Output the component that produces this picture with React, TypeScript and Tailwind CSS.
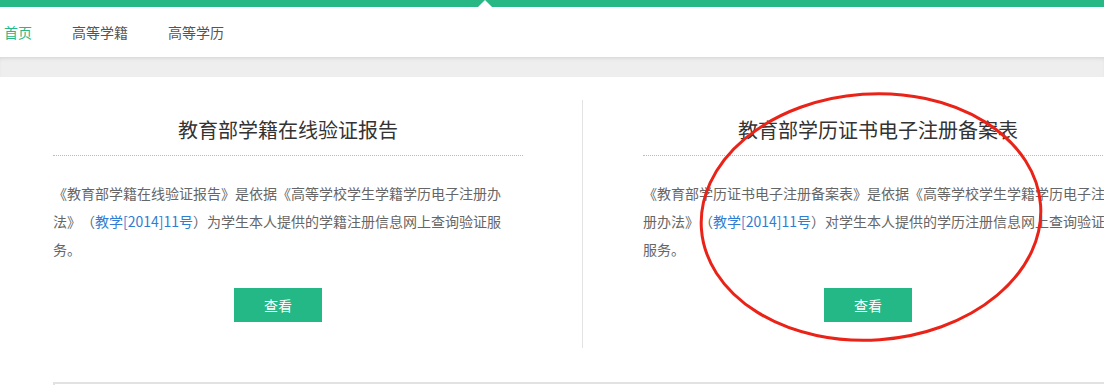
export default function App() {
  const font = { fontFamily: '"Noto Sans CJK SC", "Noto Sans", sans-serif' };

  return (
    <div className="relative w-[1104px] h-[385px] overflow-hidden bg-white" style={font}>
      {/* top bar with notch */}
      <div className="relative h-[7px] bg-[#27b886]">
        <div className="absolute left-[478px] top-0 w-0 h-0 border-l-[7px] border-r-[7px] border-b-[7px] border-l-transparent border-r-transparent border-b-white" />
      </div>

      {/* nav */}
      <div className="h-[50px] flex items-center gap-10 pl-1 text-[14px] text-[#555]">
        <span className="text-[#27b886]">首页</span>
        <span>高等学籍</span>
        <span>高等学历</span>
      </div>

      <div className="h-[20px] bg-[#eeeeee] shadow-[inset_0_3px_4px_-2px_rgba(0,0,0,0.12)]" />

      {/* panels */}
      <div className="flex pt-[23px]">
        <Panel
          className="ml-[53px] mr-[59px]"
          title="教育部学籍在线验证报告"
          before="《教育部学籍在线验证报告》是依据《高等学校学生学籍学历电子注册办法》（"
          after="）为学生本人提供的学籍注册信息网上查询验证服务。"
        />
        <div className="w-px bg-[#e3e3e3] shrink-0" />
        <Panel
          className="ml-[60px]"
          title="教育部学历证书电子注册备案表"
          before="《教育部学历证书电子注册备案表》是依据《高等学校学生学籍学历电子注册办法》（"
          after="）对学生本人提供的学历注册信息网上查询验证服务。"
        />
      </div>

      <div className="ml-[53px] mt-[34px] h-[20px] border-t-2 border-l-2 border-[#e2e2e2]" />

      {/* red hand-drawn circle */}
      <svg className="absolute left-0 top-0 pointer-events-none" width="1104" height="385">
        <ellipse
          cx="871"
          cy="217"
          rx="170"
          ry="123"
          transform="rotate(-4 871 217)"
          fill="none"
          stroke="#ea2318"
          strokeWidth="3"
        />
      </svg>
    </div>
  );
}

function Panel({
  className,
  title,
  before,
  after,
}: {
  className: string;
  title: string;
  before: string;
  after: string;
}) {
  return (
    <div className={`w-[470px] shrink-0 pt-[16px] pb-[26px] ${className}`}>
      <h2 className="text-center text-[20px] leading-[28px] text-[#333] pb-[11px] border-b border-dotted border-[#9fc9c1] whitespace-nowrap">
        {title}
      </h2>
      <p className="mt-[23px] text-[14px] leading-[28px] text-[#666] [text-spacing-trim:space-all]">
        {before}
        <a className="text-[#2f7dd0]">教学[2014]11号</a>
        {after}
      </p>
      <div className="mt-[25px] flex justify-center pr-[20px]">
        <button className="w-[88px] h-[34px] bg-[#24b886] text-white text-[14px]">查看</button>
      </div>
    </div>
  );
}
